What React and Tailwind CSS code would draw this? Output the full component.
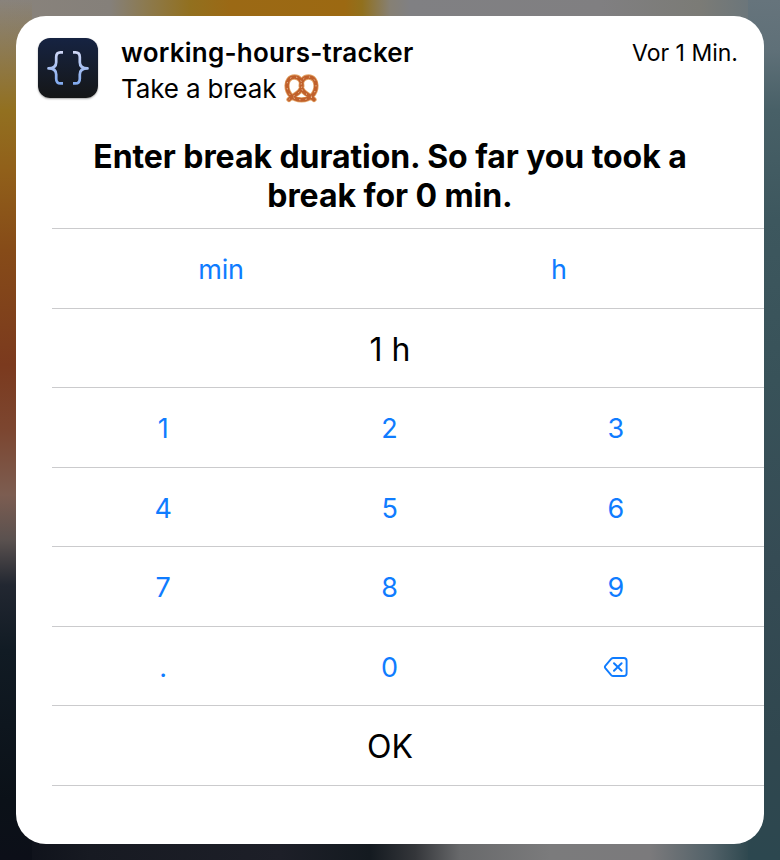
import React from "react";

const rowClass = "h-[79.5px] border-b border-[#cbcbcd]";
const pairClass = "flex h-full items-center pr-[36px]";
const tripleClass = "-ml-[2px] flex h-full items-center pr-[35px]";
const keyClass = "flex-1 pt-[4px] text-center text-[27px] tracking-[-0.2px] text-[#0f7cff]";
const valueClass = "flex-1 pt-[4px] text-center text-[32px]";

function Braces() {
  return (
    <svg className="h-[60px] w-[60px]" viewBox="0 0 60 60" fill="none">
      <defs>
        <linearGradient id="brace" x1="0" y1="13" x2="0" y2="47" gradientUnits="userSpaceOnUse">
          <stop stopColor="#d0d7f5" />
          <stop offset="1" stopColor="#7ea8ee" />
        </linearGradient>
      </defs>
      <g stroke="url(#brace)" strokeWidth="2.7" strokeLinejoin="round">
        <path d="M25 14.4h-2.500c-3.400 0-4.300 1.500-4.300 4.700v5.200c0 4-2 6.100-7.700 6.100 5.700 0 7.700 2.100 7.700 6.100v4.200c0 3.200.9 4.700 4.300 4.700H25" />
        <path d="M35 14.400h2.500c3.400 0 4.300 1.500 4.300 4.700v5.200c0 4 2 6.100 7.700 6.100-5.700 0-7.700 2.100-7.700 6.100v4.200c0 3.200-.9 4.700-4.300 4.700H35" />
      </g>
    </svg>
  );
}

function Pretzel() {
  const loop =
    "M5 25.500C10 20.500 17 19.500 17.800 12.500C18.300 6.500 15 3 10.500 3C5.500 3 3 7 3 11.500C3 19.500 8.500 25.800 17.500 25.800C26.500 25.800 32 19.500 32 11.500C32 7 29.500 3 24.500 3C20 3 16.700 6.500 17.200 12.500C18 19.500 25 20.500 30 25.500";
  return (
    <svg className="h-[29px] w-[35px]" viewBox="0 0 35 29" fill="none" strokeLinecap="round" strokeLinejoin="round">
      <path d={loop} stroke="#e3a468" strokeWidth="5.300" />
      <path d={loop} stroke="#c0602b" strokeWidth="3.700" />
      <path d={loop} stroke="#f0cdaa" strokeWidth="1" strokeDasharray="0.400 5.600" />
    </svg>
  );
}

function Backspace() {
  return (
    <svg className="mt-[2px] h-[22px] w-[26px]" viewBox="0 0 26 22" fill="none" stroke="#0f7cff" strokeLinecap="round" strokeLinejoin="round">
      <path strokeWidth="1.900" d="M10.300 2h10.500c1.900 0 2.800.9 2.800 2.800v12.400c0 1.900-.9 2.800-2.800 2.800H10.300c-.9 0-1.500-.3-2.100-.9L2.500 12.400c-.8-.9-.8-1.900 0-2.800L8.200 2.900C8.800 2.300 9.400 2 10.300 2Z" />
      <path strokeWidth="2" d="m11 7.200 7.600 7.600m0-7.600L11 14.800" />
    </svg>
  );
}

function Keys({ items }) {
  return (
    <div className={rowClass}>
      <div className={tripleClass}>
        {items.map((item) => (
          <button key={item} className={keyClass}>{item}</button>
        ))}
      </div>
    </div>
  );
}

export default function App() {
  return (
    <main className="h-[860px] w-[780px] bg-[linear-gradient(to_bottom,transparent_0px,#927020_110px,#91601a_170px,#864b18_250px,#7b3a1e_365px,#7c4630_430px,#7c5d51_495px,#5a514f_540px,#222731_585px,#111b24_650px,#0b1118_800px,#0c0f18_860px),linear-gradient(to_bottom,#66747c_0px,#5f7078_50px,#486067_110px,#3d575e_220px,#385259_380px,#354b54_560px,#30474f_740px,#2c474f_860px),linear-gradient(to_right,#89837c_0px,#85807a_110px,#8c7a50_145px,#92701f_190px,#9b6915_230px,#9c6912_345px,#91701d_362px,#868074_390px,#808083_410px,#807f81_600px,#7b7b76_700px,#66747c_765px),linear-gradient(to_right,#0c0f18_0px,#171a22_90px,#1d1f28_280px,#141a20_370px,#34363a_415px,#68696b_460px,#7b7b7c_550px,#7b7a7c_650px,#536269_710px,#2d474e_750px)] bg-[length:32px_860px,32px_860px,780px_160px,780px_60px] bg-[position:0_0,748px_0,0_0,0_800px] bg-no-repeat p-4 font-['Inter','Liberation_Sans',sans-serif] text-black">
      <section className="h-[828px] w-[748px] overflow-hidden rounded-[30px] bg-white">
        <header className="flex h-[108px] pl-[22px] pr-[26px] pt-[22px]">
          <div className="h-[60px] w-[60px] shrink-0 rounded-[12px] bg-gradient-to-b from-[#162342] to-[#151617] shadow-[0_1px_2px_rgba(0,0,0,0.35)]">
            <Braces />
          </div>
          <div className="-mt-[3px] ml-[23px] flex-1">
            <h1 className="h-[35px] whitespace-nowrap text-[26px] font-semibold leading-[36px] tracking-[0.24px]">working-hours-tracker</h1>
            <div className="flex h-[36px] items-center gap-2 whitespace-nowrap text-[26px] tracking-[-0.15px]">
              <span>Take a break</span>
              <Pretzel />
            </div>
          </div>
          <time className="whitespace-nowrap text-[23px] leading-[31px]">Vor 1 Min.</time>
        </header>
        <div className="ml-[36px]">
          <h2 className="flex h-[105px] flex-col items-center border-b border-[#cbcbcd] pr-[36px] pt-[13px] text-[32px] font-bold leading-[39px] tracking-[-0.07px]">
            <span className="whitespace-nowrap">Enter break duration. So far you took a</span>
            <span className="whitespace-nowrap">break for 0 min.</span>
          </h2>
          <div className={rowClass}>
            <div className={pairClass}>
              <button className={keyClass}>min</button>
              <button className={keyClass}>h</button>
            </div>
          </div>
          <div className={rowClass}>
            <div className={pairClass}>
              <output className={valueClass}>1 h</output>
            </div>
          </div>
          <Keys items={["1", "2", "3"]} />
          <Keys items={["4", "5", "6"]} />
          <Keys items={["7", "8", "9"]} />
          <div className={rowClass}>
            <div className={tripleClass}>
              <button className={keyClass}>.</button>
              <button className={keyClass}>0</button>
              <button className="flex flex-1 justify-center" aria-label="Delete">
                <Backspace />
              </button>
            </div>
          </div>
          <div className={rowClass}>
            <div className={pairClass}>
              <button className={valueClass}>OK</button>
            </div>
          </div>
        </div>
      </section>
    </main>
  );
}
